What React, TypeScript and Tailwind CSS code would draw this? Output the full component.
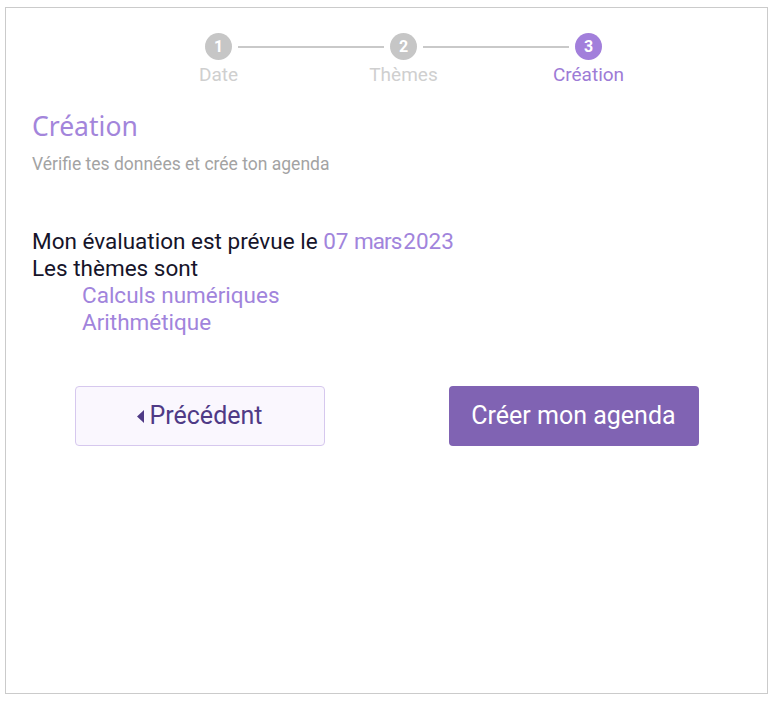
const steps = [
  { n: 1, label: "Date", active: false },
  { n: 2, label: "Thèmes", active: false },
  { n: 3, label: "Création", active: true },
];

function Stepper() {
  return (
    <div className="ml-[120px] flex w-[555px]">
      {steps.map((s, i) => (
        <div key={s.n} className="relative flex flex-1 flex-col items-center">
          {i > 0 && (
            <div className="absolute left-[calc(-50%+19px)] right-[calc(50%+20px)] top-[13px] h-[2px] bg-[#c9c9c9]" />
          )}
          <div
            className={`flex h-[27px] w-[27px] items-center justify-center rounded-full text-[16px] font-bold text-white ${
              s.active ? "bg-[#a27fdb]" : "bg-[#c6c6c6]"
            }`}
          >
            {s.n}
          </div>
          <div
            className={`mt-[3px] text-[19px] leading-[24px] ${
              s.active ? "text-[#9d7bd6]" : "text-[#cfcfcf]"
            }`}
          >
            {s.label}
          </div>
        </div>
      ))}
    </div>
  );
}

export default function App() {
  return (
    <div className="h-[704px] w-[776px] bg-white pl-[5px] pt-[7px] font-['Roboto',sans-serif]">
      <div className="h-[687px] w-[763px] border border-[#cbcbcb] pt-[25px]">
        <Stepper />
        <div className="px-[26px]">
          <h1 className="mt-[21px] font-['Noto_Sans',sans-serif] text-[26.5px] leading-[36px] text-[#a385db]">
            Création
          </h1>
          <p className="mt-[8px] text-[17.5px] leading-[24px] text-[#a3a3a3]">
            Vérifie tes données et crée ton agenda
          </p>
          <div className="mt-[52px] text-[22.5px] leading-[27px] text-[#16142a]">
            <div>
              Mon évaluation est prévue le{" "}
              <span className="text-[#a184dc]">
                07 <span className="tracking-[-1px]">mars</span>
                <span className="ml-[2px]">2023</span>
              </span>
            </div>
            <div>Les thèmes sont</div>
            <div className="pl-[50px] text-[#a184dc]">
              <div>Calculs numériques</div>
              <div>Arithmétique</div>
            </div>
          </div>
        </div>
        <div className="mx-auto mt-[50px] grid w-[748px] grid-cols-2">
          <div className="flex justify-center">
            <button className="flex h-[60px] w-[250px] items-center justify-center gap-[6px] rounded-[4px] border border-[#d6c8ee] bg-[#faf7fe] text-[25px] text-[#4f3a86]">
              <svg width="7" height="13" viewBox="0 0 7 13">
                <path d="M7 0 L0 6.5 L7 13 Z" fill="#4f3a86" />
              </svg>
              Précédent
            </button>
          </div>
          <div className="flex justify-center">
            <button className="flex h-[60px] w-[250px] items-center justify-center rounded-[4px] bg-[#8063b3] text-[25px] text-white">
              Créer mon agenda
            </button>
          </div>
        </div>
      </div>
    </div>
  );
}
